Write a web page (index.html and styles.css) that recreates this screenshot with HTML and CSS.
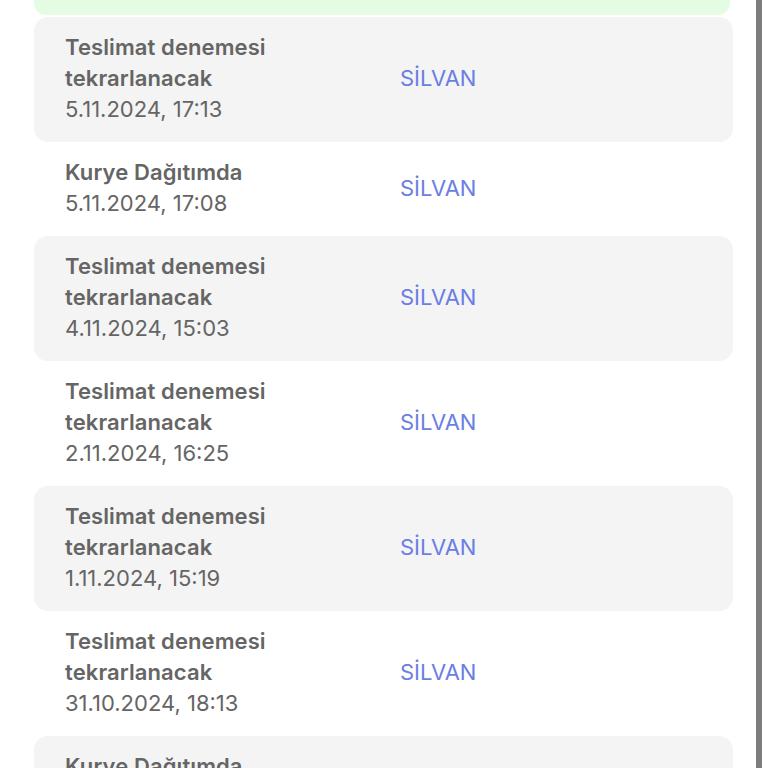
FILE: index.html
```html
<!DOCTYPE html>
<html lang="tr">
<head>
  <meta charset="UTF-8">
  <title>Gönderi Hareketleri</title>
  <meta name="viewport" content="width=device-width, initial-scale=1.0">
  <link rel="stylesheet" href="styles.css">
</head>
<body>
  <div class="screen">
    <div class="status-card"></div>

    <div class="events">
      <div class="event shaded">
        <div class="info">
          <div class="title">Teslimat denemesi tekrarlanacak</div>
          <div class="date">5.11.2024, 17:13</div>
        </div>
        <div class="place">SİLVAN</div>
      </div>

      <div class="event">
        <div class="info">
          <div class="title">Kurye Dağıtımda</div>
          <div class="date">5.11.2024, 17:08</div>
        </div>
        <div class="place">SİLVAN</div>
      </div>

      <div class="event shaded">
        <div class="info">
          <div class="title">Teslimat denemesi tekrarlanacak</div>
          <div class="date">4.11.2024, 15:03</div>
        </div>
        <div class="place">SİLVAN</div>
      </div>

      <div class="event">
        <div class="info">
          <div class="title">Teslimat denemesi tekrarlanacak</div>
          <div class="date">2.11.2024, 16:25</div>
        </div>
        <div class="place">SİLVAN</div>
      </div>

      <div class="event shaded">
        <div class="info">
          <div class="title">Teslimat denemesi tekrarlanacak</div>
          <div class="date">1.11.2024, 15:19</div>
        </div>
        <div class="place">SİLVAN</div>
      </div>

      <div class="event">
        <div class="info">
          <div class="title">Teslimat denemesi tekrarlanacak</div>
          <div class="date">31.10.2024, 18:13</div>
        </div>
        <div class="place">SİLVAN</div>
      </div>

      <div class="event shaded">
        <div class="info">
          <div class="title">Kurye Dağıtımda</div>
          <div class="date">31.10.2024, 09:41</div>
        </div>
        <div class="place">SİLVAN</div>
      </div>
    </div>
  </div>
</body>
</html>
```

FILE: styles.css
```css
:root {
  --text: #656565;
  --accent: #6b7ee3;
  --shade: #f4f4f4;
  --green: #e3fce3;
}

body {
  margin: 0;
  background: #fff;
  font-family: Inter, 'Noto Sans', sans-serif;
  color: var(--text);
  overflow: hidden;
  height: 768px;
}

.screen {
  width: 762px;
  height: 768px;
  border-right: 6px solid #7d7d7d;
  box-sizing: border-box;
  padding: 0 23px 0 34px;
  overflow: hidden;
}

.status-card {
  height: 15px;
  background: var(--green);
  border-radius: 0 0 12px 12px;
  margin-right: 3px;
  margin-bottom: 2px;
}

.event {
  display: flex;
  align-items: center;
  padding: 15px 31px 17px;
  border-radius: 14px;
  font-size: 22px;
  line-height: 31px;
}

.event.shaded {
  background: var(--shade);
}

.info {
  width: 335px;
}

.title {
  font-weight: 600;
  width: 215px;
  letter-spacing: 0.1px;
}

.place {
  color: var(--accent);
}
```
